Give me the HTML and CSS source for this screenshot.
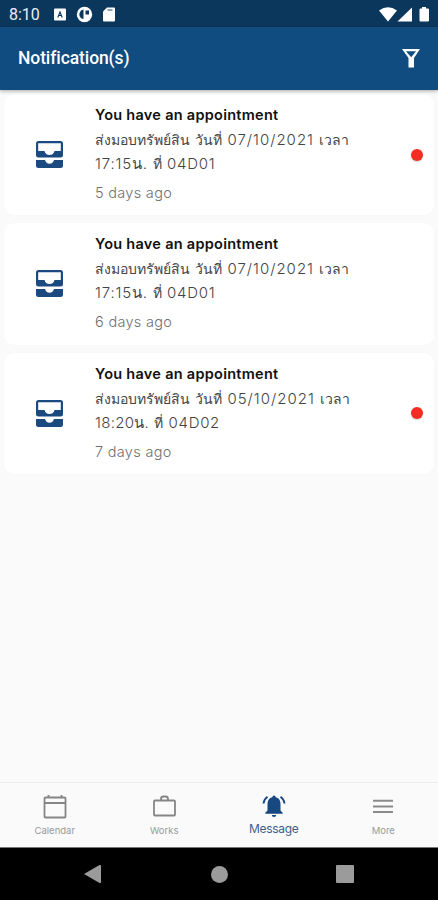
FILE: index.html
```html
<!DOCTYPE html>
<html lang="th">
<head>
<meta charset="utf-8">
<title>Notification(s)</title>
<link rel="stylesheet" href="styles.css">
</head>
<body>
<svg class="defs" width="0" height="0">
  <symbol id="inbox" viewBox="0 0 27 27">
    <path fill="#1b4a80" fill-rule="evenodd" d="M2.500 0h22Q27 0 27 2.500v11.500Q27 16.500 24.500 16.500h-22Q0 16.500 0 14V2.500Q0 0 2.500 0zM2.200 2.300V10H8.500Q9.500 14 13.500 14T18.500 10h6.300v-7.700z"/>
    <path fill="#1b4a80" d="M0 19h9q1 3.700 4.500 3.700T18 19h9v5.500q0 2.500-2.500 2.500h-22Q0 27 0 24.500z"/>
  </symbol>
</svg>
<div class="phone">
  <header class="status">
    <span class="clock">8:10</span>
    <svg class="left-icons" width="64" height="18" viewBox="0 0 64 18">
      <rect x="1" y="2.500" width="12" height="12" rx="1" fill="#fff"/>
      <path d="M4.800 11.500l2.200-5.500 2.200 5.500M5.500 9.500h3" fill="none" stroke="#0c375d" stroke-width="1.100"/>
      <circle cx="31.500" cy="8.500" r="7.700" fill="#fff"/>
      <path d="M30.500 3.500A5 5 0 0 0 28.500 12.500l2 .5zM32.500 4.500h3.500v4h-3.500z" fill="#0c375d"/>
      <path d="M54 1.500h7q1 0 1 1v12q0 1-1 1H51q-1 0-1-1V5.500z" fill="#fff"/>
      <path d="M54.500 4h5" stroke="#0c375d" stroke-opacity=".6" stroke-width="1.500"/>
    </svg>
    <svg class="right-icons" width="52" height="18" viewBox="0 0 52 18">
      <path d="M0 4.500Q9-2 18 4.500L9 15.500z" fill="#fff"/>
      <path d="M33 1.500v14H18.500z" fill="#fff"/>
      <path d="M43 1h4v1.500h2q1 0 1 1v11q0 1-1 1h-7.500q-1 0-1-1v-11q0-1 1-1H43z" fill="#fff"/>
    </svg>
  </header>
  <div class="appbar">
    <h1>Notification(s)</h1>
    <svg width="20" height="20" viewBox="0 0 20 20"><path d="M1 1h18l-6 9v9.500H7.500V10z" fill="#fff"/><path d="M5 3.300h10L10.200 9.200z" fill="#104c80"/></svg>
  </div>
  <main>
    <article class="card">
      <svg class="inbox"><use href="#inbox"/></svg>
      <div class="body">
        <h2>You have an appointment</h2>
        <p><span class="thai">ส่งมอบทรัพย์สิน</span> <span class="thai on">วันที่</span> <span class="date">07/10/2021</span> <span class="thai">เวลา</span><br><span class="clocktime">17:15น.</span> <span class="thai at">ที่</span> <span class="code">04D01</span></p>
        <time>5 days ago</time>
      </div>
      <i class="dot"></i>
    </article>
    <article class="card">
      <svg class="inbox"><use href="#inbox"/></svg>
      <div class="body">
        <h2>You have an appointment</h2>
        <p><span class="thai">ส่งมอบทรัพย์สิน</span> <span class="thai on">วันที่</span> <span class="date">07/10/2021</span> <span class="thai">เวลา</span><br><span class="clocktime">17:15น.</span> <span class="thai at">ที่</span> <span class="code">04D01</span></p>
        <time>6 days ago</time>
      </div>
    </article>
    <article class="card">
      <svg class="inbox"><use href="#inbox"/></svg>
      <div class="body">
        <h2>You have an appointment</h2>
        <p><span class="thai">ส่งมอบทรัพย์สิน</span> <span class="thai on">วันที่</span> <span class="date">05/10/2021</span> <span class="thai">เวลา</span><br><span class="clocktime later">18:20น.</span> <span class="thai at">ที่</span> <span class="code">04D02</span></p>
        <time>7 days ago</time>
      </div>
      <i class="dot"></i>
    </article>
  </main>
  <nav class="tabs">
    <div class="tab">
      <svg width="26" height="28" viewBox="0 0 26 28"><path d="M3.500 4.500h19q1 0 1 1v18q0 1-1 1h-19q-1 0-1-1v-18q0-1 1-1zM2.500 10h21M6.500 2v3M19.500 2v3" fill="none" stroke="#858585" stroke-width="1.800"/></svg>
      <span>Calendar</span>
    </div>
    <div class="tab">
      <svg width="26" height="28" viewBox="0 0 26 28"><path d="M4 7.500h19q1 0 1 1v13q0 1-1 1H4q-1 0-1-1v-13q0-1 1-1zM10 7.500V6Q10 3.500 12.500 3.500h2Q17 3.500 17 6v1.500" fill="none" stroke="#858585" stroke-width="1.800"/></svg>
      <span>Works</span>
    </div>
    <div class="tab active">
      <svg width="26" height="28" viewBox="0 0 26 28"><path d="M13 2.500q1.500 0 1.700 1.800Q19.500 5.500 19.500 11v6.500l2.200 2.200v1H4.300v-1l2.200-2.200V11q0-5.500 4.800-6.700Q11.500 2.500 13 2.500zM10.800 22h4.400q0 2-2.200 2t-2.200-2z" fill="#174980"/><path d="M6.500 3.700Q3 6 2.500 10.500M19.500 3.700Q23 6 23.500 10.500" fill="none" stroke="#174980" stroke-width="1.900"/></svg>
      <span>Message</span>
    </div>
    <div class="tab">
      <svg width="26" height="28" viewBox="0 0 26 28"><path d="M3 7.800h20M3 13.500h20M3 19h20" stroke="#8a8a8a" stroke-width="2"/></svg>
      <span>More</span>
    </div>
  </nav>
  <footer class="system">
    <svg width="18" height="20" viewBox="0 0 18 20"><path d="M0 10L15.500 1q1.500-.5 1.500 1v16q0 1.500-1.500 1z" fill="#9b9b9b"/></svg>
    <i class="home"></i>
    <i class="recent"></i>
  </footer>
</div>
</body>
</html>
```

FILE: styles.css
```css
* { box-sizing: border-box; }
body { margin: 0; font-family: Inter, "Liberation Sans", "Noto Sans", sans-serif; }
.defs { display: block; }
.phone { width: 438px; height: 900px; display: flex; flex-direction: column; background: #fafafa; overflow: hidden; }
.status { height: 27px; flex: none; background: #0c375d; display: flex; align-items: center; padding: 2px 7px 0 9px; color: #e9eef3; }
.clock { font: 16px/20px Roboto, sans-serif; width: 44px; }
.right-icons { margin-left: auto; }
.appbar { height: 63px; flex: none; background: #104c80; display: flex; align-items: center; justify-content: space-between; padding: 0 17px 2px 18px; box-shadow: 0 1px 4px #0005; z-index: 1; }
.appbar h1 { margin: 0; color: #fff; font: 500 17.500px/24px Roboto, sans-serif; letter-spacing: -.1px; }
main { flex: 1; padding: 4px 4px 0; display: flex; flex-direction: column; gap: 8px; }
.card { height: 121.300px; border-radius: 10px; background: #fff; display: flex; align-items: center; padding: 0 11px 0 32px; box-shadow: 0 0 2px #00000008; }
.inbox { width: 27px; height: 27px; flex: none; }
.body { margin-left: 32px; align-self: stretch; padding-top: 10px; white-space: nowrap; }
.body h2 { margin: 0; font-size: 14.500px; line-height: 22px; font-weight: 600; color: #111; letter-spacing: .27px; }
.body p { margin: 2px 0 0; font-size: 15px; line-height: 24px; font-weight: 300; color: #444; word-spacing: 1px; }
.body p span { display: inline-block; }
.body time { display: block; margin-top: 7px; font-size: 14.500px; line-height: 20px; font-weight: 300; color: #707070; letter-spacing: .3px; }
.body .thai { font-size: 14px; }
.date { letter-spacing: 1px; }
.clocktime { letter-spacing: .8px; }
.later { letter-spacing: .3px; }
.code { letter-spacing: .7px; }
.dot { width: 12px; height: 12px; margin-left: auto; border-radius: 50%; background: #f32d24; box-shadow: 0 1px 2px #0003; }
.tabs { height: 65px; flex: none; border-top: 1px solid #ededed; display: grid; grid-template-columns: repeat(4, 1fr); padding-top: 10px; }
.tab { display: flex; flex-direction: column; align-items: center; font-size: 9.500px; line-height: 16px; color: #999; }
.tab span { margin-top: 2px; }
.active { color: #40608f; font-size: 12px; }
.active span { margin-top: 0; letter-spacing: -.3px; }
.system { height: 53px; flex: none; background: #000; border-top: 1px solid #777; display: flex; align-items: center; padding-left: 84px; }
.home { width: 17px; height: 17px; border-radius: 50%; background: #9b9b9b; margin-left: 109px; }
.recent { width: 18px; height: 18px; border-radius: 1px; background: #9b9b9b; margin-left: 108px; }
```
